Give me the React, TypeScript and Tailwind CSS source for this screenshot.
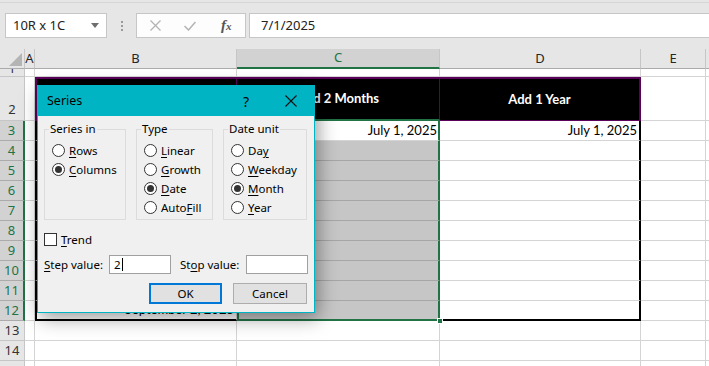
import React from "react";

const bDates = [
  "July 1, 2025",
  "July 8, 2025",
  "July 15, 2025",
  "July 22, 2025",
  "July 29, 2025",
  "August 5, 2025",
  "August 12, 2025",
  "August 19, 2025",
  "August 26, 2025",
  "September 2, 2025",
];

function U({ children }: { children: React.ReactNode }) {
  return <span className="underline decoration-1 underline-offset-[2px]">{children}</span>;
}

function Radio({ label, checked }: { label: React.ReactNode; checked?: boolean }) {
  return (
    <div className="flex h-[19px] items-center">
      <span className="ml-[7px] flex h-[13px] w-[13px] shrink-0 items-center justify-center rounded-full border border-[#333333] bg-white">
        {checked && <span className="h-[7px] w-[7px] rounded-full bg-[#333333]" />}
      </span>
      <span className="ml-[4px] whitespace-nowrap leading-none">{label}</span>
    </div>
  );
}

function Group({ title, width, children }: { title: string; width: string; children: React.ReactNode }) {
  return (
    <fieldset className={`h-[99px] min-w-0 shrink-0 border border-[#dcdcdc] ${width}`}>
      <legend className="ml-[4px] px-[1px] leading-[16px]">{title}</legend>
      <div className="pt-[4px]">{children}</div>
    </fieldset>
  );
}

function Dialog() {
  return (
    <div className="absolute left-[37px] top-[85px] flex h-[228px] w-[278px] flex-col border border-[#00b4c4] bg-[#f0f0f0] font-['Noto_Sans',sans-serif] text-[11.5px] text-black shadow-[3px_5px_18px_rgba(0,0,0,0.4)]">
      <div className="flex h-[30px] shrink-0 items-center bg-[#00b4c4] pl-[9px]">
        <span className="text-[12.5px]">Series</span>
        <span className="ml-auto w-[12px] text-center text-[14px]">?</span>
        <svg className="ml-[33px] mr-[17px]" width="12" height="12" viewBox="0 0 12 12">
          <path d="M0.5 0.5 L11.5 11.5 M11.5 0.5 L0.5 11.5" stroke="#111" strokeWidth="1.1" fill="none" />
        </svg>
      </div>
      <div className="flex flex-col px-[6px] pt-[5px]">
        <div className="flex gap-[10px]">
          <Group title="Series in" width="w-[82px]">
            <Radio label={<><U>R</U>ows</>} />
            <Radio label={<><U>C</U>olumns</>} checked />
          </Group>
          <Group title="Type" width="w-[77px]">
            <Radio label={<><U>L</U>inear</>} />
            <Radio label={<><U>G</U>rowth</>} />
            <Radio label={<><U>D</U>ate</>} checked />
            <Radio label={<>Auto<U>F</U>ill</>} />
          </Group>
          <Group title="Date unit" width="w-[84px]">
            <Radio label={<>Da<U>y</U></>} />
            <Radio label={<><U>W</U>eekday</>} />
            <Radio label={<><U>M</U>onth</>} checked />
            <Radio label={<><U>Y</U>ear</>} />
          </Group>
        </div>
        <div className="mt-[13px] flex h-[13px] items-center">
          <span className="h-[13px] w-[13px] border border-[#333333] bg-white" />
          <span className="ml-[4px] leading-none">
            <U>T</U>rend
          </span>
        </div>
        <div className="mt-[9px] flex h-[19px] items-center">
          <span className="w-[65px] leading-none">
            <U>S</U>tep value:
          </span>
          <div className="flex h-[19px] w-[62px] items-center border border-[#a0a0a0] bg-white pl-[4px]">
            <span className="leading-none">2</span>
            <span className="ml-[1px] h-[13px] w-px bg-black" />
          </div>
          <span className="ml-[9px] w-[66px] leading-none">
            St<U>o</U>p value:
          </span>
          <div className="h-[19px] w-[62px] border border-[#a0a0a0] bg-white" />
        </div>
        <div className="mt-[9px] flex justify-end gap-[11px] pr-[1px]">
          <div className="flex h-[21px] w-[73px] items-center justify-center border-2 border-[#0078d7] bg-[#e1e1e1]">
            OK
          </div>
          <div className="flex h-[21px] w-[74px] items-center justify-center border border-[#adadad] bg-[#e1e1e1]">
            Cancel
          </div>
        </div>
      </div>
    </div>
  );
}

function TopBar() {
  return (
    <div className="h-[49px] bg-[#e6e6e6] pt-[2px]">
      <div className="flex items-start border-t border-[#d6d6d6] pt-[10px] font-['Noto_Sans',sans-serif] text-[13px] text-[#222]">
        <div className="ml-[5px] flex h-[25px] w-[102px] items-center border border-[#c6c6c6] bg-white pl-[7px]">
          <span>10R x 1C</span>
          <svg className="ml-auto mr-[7px]" width="8" height="5" viewBox="0 0 8 5">
            <path d="M0 0 L8 0 L4 5 Z" fill="#6e6e6e" />
          </svg>
        </div>
        <div className="ml-[14px] mt-[8px] flex flex-col gap-[2px]">
          <span className="h-[2px] w-[2px] bg-[#9a9a9a]" />
          <span className="h-[2px] w-[2px] bg-[#9a9a9a]" />
          <span className="h-[2px] w-[2px] bg-[#9a9a9a]" />
        </div>
        <div className="ml-[13px] flex h-[25px] w-[110px] items-center border border-[#c6c6c6] bg-[#fdfdfd]">
          <svg className="ml-[13px]" width="11" height="11" viewBox="0 0 11 11">
            <path d="M0.5 0.5 L10.5 10.5 M10.5 0.5 L0.5 10.5" stroke="#b3b3b3" strokeWidth="1.3" fill="none" />
          </svg>
          <svg className="ml-[23px]" width="12" height="10" viewBox="0 0 12 10">
            <path d="M0.5 5 L4.5 9 L11.5 1" stroke="#b3b3b3" strokeWidth="1.5" fill="none" />
          </svg>
          <span className="ml-[25px] font-['Liberation_Serif',serif] text-[15px] font-bold italic leading-none text-[#555]">
            f<span className="text-[11px]">x</span>
          </span>
        </div>
        <div className="ml-[3px] flex h-[25px] flex-1 items-center border border-r-0 border-[#c6c6c6] bg-white pl-[11px]">
          7/1/2025
        </div>
      </div>
    </div>
  );
}

const hdrNormal =
  "flex w-[25px] shrink-0 justify-center overflow-hidden border-r border-b border-r-[#c6c6c6] border-b-[#c6c6c6] bg-[#e6e6e6] text-[#333]";
const hdrSel =
  "flex w-[25px] shrink-0 items-center justify-center border-r-2 border-b border-r-[#217346] border-b-[#ababab] bg-[#d2d2d2] text-[#217346]";
const grid = "border-r border-b border-r-[#d4d4d4] border-b-[#d4d4d4]";

function ColHeader() {
  return (
    <div className="flex h-[20px] bg-[#e6e6e6] font-['Noto_Sans',sans-serif] text-[13px] text-[#262626]">
      <div className="flex w-[25px] shrink-0 items-end justify-end border-r border-b border-r-[#c6c6c6] border-b-[#ababab] pb-[2px] pr-[2px]">
        <svg width="13" height="13" viewBox="0 0 13 13">
          <path d="M13 0 L13 13 L0 13 Z" fill="#b4b4b4" />
        </svg>
      </div>
      <div className="flex w-[10px] shrink-0 items-center justify-center overflow-visible border-r border-b border-r-[#c6c6c6] border-b-[#ababab]">
        A
      </div>
      <div className="flex w-[202px] shrink-0 items-center justify-center border-r border-b border-r-[#c6c6c6] border-b-[#ababab]">
        B
      </div>
      <div className="flex w-[203px] shrink-0 items-center justify-center border-r border-b-2 border-r-[#c6c6c6] border-b-[#217346] bg-[#d2d2d2] text-[#217346]">
        C
      </div>
      <div className="flex w-[201px] shrink-0 items-center justify-center border-r border-b border-r-[#c6c6c6] border-b-[#ababab]">
        D
      </div>
      <div className="flex w-[65px] shrink-0 items-center justify-center border-r border-b border-r-[#c6c6c6] border-b-[#ababab]">
        E
      </div>
      <div className="flex-1 border-b border-b-[#ababab]" />
    </div>
  );
}

function Row1() {
  return (
    <div className="flex h-[8px] bg-white">
      <div className={hdrNormal + " font-['Noto_Sans',sans-serif] text-[13px]"}>
        <span className="-mt-[9px] block leading-[16px]">1</span>
      </div>
      <div className={"w-[10px] shrink-0 " + grid} />
      <div className={"w-[202px] shrink-0 " + grid} />
      <div className={"w-[203px] shrink-0 " + grid} />
      <div className={"w-[201px] shrink-0 " + grid} />
      <div className={"w-[65px] shrink-0 " + grid} />
      <div className="flex-1 border-b border-b-[#d4d4d4]" />
    </div>
  );
}

function Row2() {
  return (
    <div className="flex h-[44px] bg-white font-['Lato',sans-serif] text-[13px] font-bold text-white">
      <div className={hdrNormal + " items-end pb-[1px] font-['Noto_Sans',sans-serif] font-normal"}>2</div>
      <div className={"w-[10px] shrink-0 " + grid} />
      <div className="flex w-[202px] shrink-0 items-center justify-center border-t-2 border-b border-l-2 border-r border-[#5b005b] bg-black">
        Add 1 Week
      </div>
      <div className="flex w-[203px] shrink-0 items-center justify-center border-t-2 border-r border-b-2 border-t-[#5b005b] border-r-[#5b005b] border-b-[#217346] bg-black">
        Add 2 Months
      </div>
      <div className="flex w-[201px] shrink-0 items-center justify-center border-t-2 border-r-2 border-b border-[#5b005b] bg-black">
        Add 1 Year
      </div>
      <div className={"w-[65px] shrink-0 " + grid} />
      <div className="flex-1 border-b border-b-[#d4d4d4]" />
    </div>
  );
}

function DataRow({ r }: { r: number }) {
  const last = r === 12;
  const bBottom = last ? "border-b-2 border-b-black" : "border-b border-b-[#d4d4d4]";
  const cBottom = last
    ? "border-b-2 border-b-[#217346]"
    : r === 3
    ? "border-b border-b-[#d4d4d4]"
    : "border-b border-b-[#a6a6a6]";
  return (
    <div className="flex h-[20px] bg-white font-['Lato',sans-serif] text-[13px] text-black">
      <div className={hdrSel + " font-['Noto_Sans',sans-serif]"}>{r}</div>
      <div className={"w-[10px] shrink-0 " + grid} />
      <div
        className={`flex w-[202px] shrink-0 items-center justify-end border-l-2 border-r border-l-black border-r-[#d4d4d4] pr-[2px] ${bBottom}`}
      >
        {bDates[r - 3]}
      </div>
      <div
        className={`flex w-[203px] shrink-0 items-center justify-end border-l-2 border-r-2 border-l-[#217346] border-r-[#217346] pr-[1px] ${cBottom} ${
          r === 3 ? "bg-white" : "bg-[#c6c6c6]"
        }`}
      >
        {r === 3 ? "July 1, 2025" : ""}
      </div>
      <div className={`flex w-[201px] shrink-0 items-center justify-end border-r-2 border-r-black pr-[2px] ${bBottom}`}>
        {r === 3 ? "July 1, 2025" : ""}
      </div>
      <div className={"w-[65px] shrink-0 " + grid} />
      <div className="flex-1 border-b border-b-[#d4d4d4]" />
    </div>
  );
}

function PlainRow({ r, h }: { r?: number; h: string }) {
  return (
    <div className={`flex bg-white ${h}`}>
      <div className={hdrNormal + " items-center font-['Noto_Sans',sans-serif] text-[13px]"}>{r}</div>
      <div className={"w-[10px] shrink-0 " + grid} />
      <div className={"w-[202px] shrink-0 " + grid} />
      <div className={"w-[203px] shrink-0 " + grid} />
      <div className={"w-[201px] shrink-0 " + grid} />
      <div className={"w-[65px] shrink-0 " + grid} />
      <div className="flex-1 border-b border-b-[#d4d4d4]" />
    </div>
  );
}

export default function App() {
  const dataRows = [3, 4, 5, 6, 7, 8, 9, 10, 11, 12];
  return (
    <div className="relative h-[366px] w-[709px] overflow-hidden bg-white">
      <TopBar />
      <ColHeader />
      <Row1 />
      <Row2 />
      {dataRows.map((r) => (
        <DataRow key={r} r={r} />
      ))}
      <PlainRow r={13} h="h-[20px]" />
      <PlainRow r={14} h="h-[20px]" />
      <PlainRow h="h-[20px]" />
      <div className="absolute left-[437px] top-[318px] h-[6px] w-[6px] border border-white bg-[#217346]" />
      <Dialog />
    </div>
  );
}
